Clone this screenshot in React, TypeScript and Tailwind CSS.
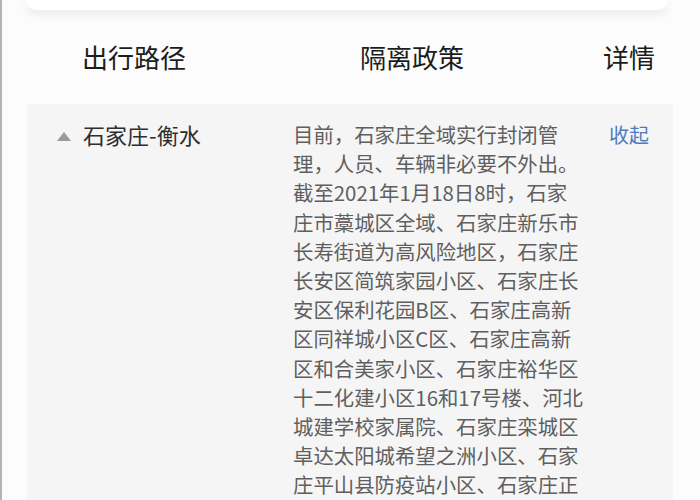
const policyLines = [
  "目前，石家庄全域实行封闭管",
  "理，人员、车辆非必要不外出。",
  "截至2021年1月18日8时，石家",
  "庄市藁城区全域、石家庄新乐市",
  "长寿街道为高风险地区，石家庄",
  "长安区简筑家园小区、石家庄长",
  "安区保利花园B区、石家庄高新",
  "区同祥城小区C区、石家庄高新",
  "区和合美家小区、石家庄裕华区",
  "十二化建小区16和17号楼、河北",
  "城建学校家属院、石家庄栾城区",
  "卓达太阳城希望之洲小区、石家",
  "庄平山县防疫站小区、石家庄正",
];

const font = {
  fontFamily: '"Noto Sans CJK SC", "Noto Sans", sans-serif',
};

const App = () => {
  return (
    <main
      className="h-[500px] w-[700px] overflow-hidden border-l-2 border-[#b3b3b3] bg-[#fbfcfb]"
      style={font}
    >
      {/* bottom of the search card above */}
      <div className="ml-[24px] mr-[32px] h-[10px] rounded-b-[16px] bg-white shadow-[0_4px_10px_rgba(0,0,0,0.08)]" />

      <div className="flex h-[94px] items-center pl-[80px] text-[26px] leading-none text-[#1c1c1c]">
        <span className="w-[278px]">出行路径</span>
        <span className="w-[243px]">隔离政策</span>
        <span>详情</span>
      </div>

      <section className="ml-[25px] mr-[27px] bg-[#f5f5f5] pb-[40px] pl-[30px] pt-[16px]">
        <div className="flex">
          <div className="flex h-[29px] w-[236px] shrink-0 items-center gap-[12px] self-start">
            <svg width="14" height="9" viewBox="0 0 14 9" className="mt-[4px]">
              <polygon points="7,0 14,9 0,9" fill="#9a9a9a" />
            </svg>
            <span className="text-[22px] leading-[29px] text-[#2e2e2e]">
              石家庄-衡水
            </span>
          </div>

          <div className="w-[316px] shrink-0 text-[20.4px] leading-[29.2px] text-[#5f5f5f]">
            {policyLines.map((line) => (
              <div key={line} className="whitespace-nowrap">
                {line}
              </div>
            ))}
          </div>

          <button className="self-start text-[20px] leading-[29px] text-[#4d7bbf]">
            收起
          </button>
        </div>
      </section>
    </main>
  );
};

export default App;
